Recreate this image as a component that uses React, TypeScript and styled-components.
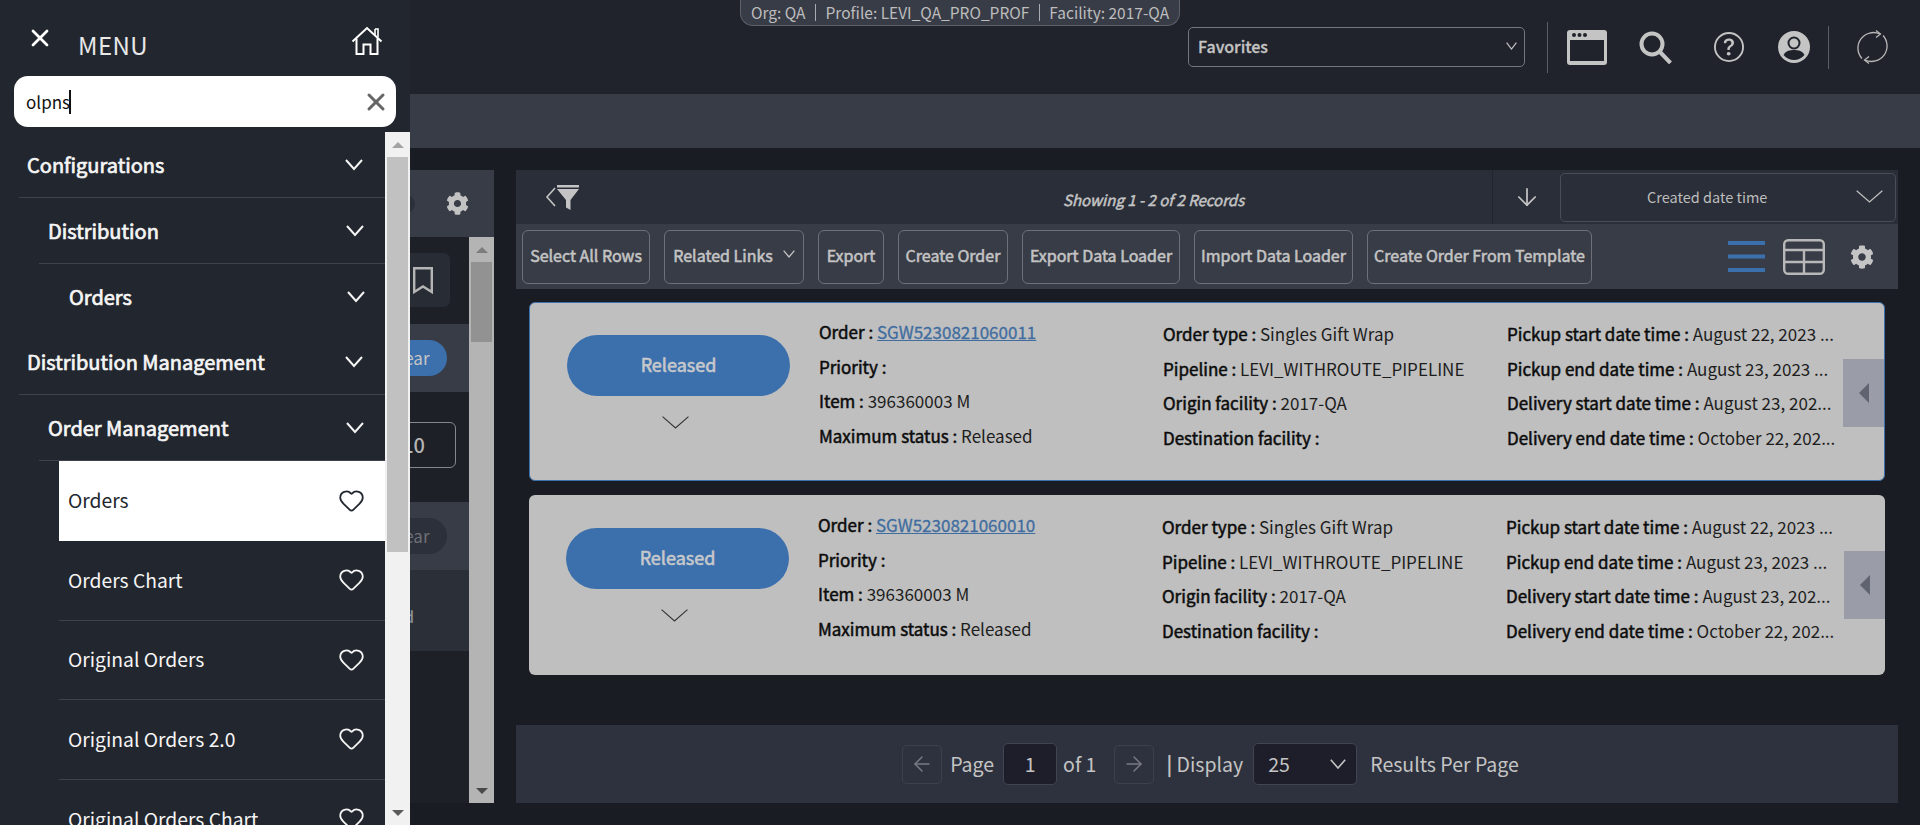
import styled, { createGlobalStyle } from "styled-components";
import { BsQuestionCircle } from "react-icons/bs";
import { FaCog } from "react-icons/fa";
import { ArrowDown, ArrowLeft, ArrowRight, Heart, X } from "lucide-react";

const FONT = `"Noto Sans CJK SC", "Noto Sans", sans-serif`;

const GlobalStyle = createGlobalStyle`
	* {
		box-sizing: border-box;
	}
	html,
	body {
		margin: 0;
		padding: 0;
		background: #191c22;
		overflow: hidden;
	}
	body {
		font-family: ${FONT};
	}
`;

const Page = styled.div`
	position: relative;
	width: 1920px;
	height: 825px;
	overflow: hidden;
	display: flex;
	flex-direction: column;
	background: #191c22;
`;

/* ---------- header ---------- */

const Header = styled.header`
	height: 94px;
	flex: none;
	display: flex;
	align-items: center;
	background: #21232c;
	padding-left: 740px;
`;

const OrgPill = styled.div`
	align-self: flex-start;
	height: 26px;
	width: 440px;
	flex: none;
	display: flex;
	align-items: center;
	justify-content: center;
	background: #383c47;
	border: 1px solid #5d616c;
	border-top: 0;
	border-radius: 0 0 13px 13px;
	color: #bdbdbd;
	font-size: 15.5px;
	line-height: 17px;
	white-space: nowrap;
`;

const OrgItem = styled.span`
	padding: 0 9.5px;
	& + & {
		border-left: 1px solid #a9abb0;
	}
`;

const Favorites = styled.div`
	width: 337px;
	height: 40px;
	flex: none;
	margin-left: 8px;
	padding: 0 7px 2px 9px;
	display: flex;
	align-items: center;
	justify-content: space-between;
	border: 1px solid #74767d;
	border-radius: 5px;
	color: #c4c4c4;
	font-size: 16px;
	font-weight: 500;
	-webkit-text-stroke: 0.3px;
	line-height: 20px;
`;

const VLine = styled.div<{ $h: number; $ml: number }>`
	width: 1px;
	height: ${(p) => p.$h}px;
	flex: none;
	margin-left: ${(p) => p.$ml}px;
	background: #5b5d64;
`;

const IconSlot = styled.div<{ $ml: number }>`
	display: flex;
	flex: none;
	align-items: center;
	margin-left: ${(p) => p.$ml}px;
	color: #c4c4c4;
`;

const SubBar = styled.div`
	height: 54px;
	flex: none;
	background: #383c47;
`;

/* ---------- body ---------- */

const Body = styled.div`
	flex: 1;
	display: flex;
	align-items: flex-start;
	padding: 22px 0 0 18px;
`;

const FilterPanel = styled.aside`
	width: 476px;
	height: 633px;
	flex: none;
	display: flex;
	flex-direction: column;
`;

const FilterHead = styled.div`
	height: 67px;
	flex: none;
	display: flex;
	align-items: center;
	justify-content: flex-end;
	gap: 31px;
	padding-right: 25px;
	background: #383c47;
	color: #c2c2c2;
`;

const HeadToggle = styled.div`
	width: 40px;
	height: 20px;
	border-radius: 10px;
	background: #2c303a;
`;

const FilterMain = styled.div`
	flex: 1;
	display: flex;
	min-height: 0;
`;

const FilterContent = styled.div`
	flex: 1;
	background: #1d2027;
	display: flex;
	flex-direction: column;
	color: #b5b5b5;
`;

const SaveRow = styled.div`
	display: flex;
	justify-content: flex-end;
	padding: 16px 19px 17px 0;
`;

const SaveButton = styled.div`
	width: 80px;
	height: 54px;
	display: flex;
	align-items: center;
	justify-content: flex-end;
	padding-right: 17px;
	border-radius: 6px;
	background: #272c35;
	color: #b5b5b5;
`;

const ClearBand = styled.div<{ $mb: number }>`
	height: 68px;
	flex: none;
	display: flex;
	align-items: center;
	justify-content: flex-end;
	padding-right: 22px;
	margin-bottom: ${(p) => p.$mb}px;
	background: #383c47;
`;

const ClearPill = styled.div<{ $active: boolean }>`
	width: 80px;
	height: 36px;
	display: flex;
	align-items: center;
	justify-content: center;
	padding-left: 4px;
	border-radius: 18px;
	background: ${(p) => (p.$active ? "#3c70ad" : "#2c303a")};
	color: ${(p) => (p.$active ? "#c4c4c4" : "#6d6f76")};
	font-size: 17px;
	line-height: 20px;
`;

const CountRow = styled.div`
	display: flex;
	justify-content: flex-end;
	padding: 0 13px 34px 0;
`;

const CountBox = styled.div`
	width: 120px;
	height: 46px;
	display: flex;
	align-items: center;
	justify-content: flex-end;
	padding-right: 30px;
	border: 1px solid #85878c;
	border-radius: 6px;
	color: #b5b5b5;
	font-size: 20px;
	font-weight: 500;
	line-height: 24px;
`;

const StatusRow = styled.div`
	height: 81px;
	flex: none;
	display: flex;
	align-items: center;
	justify-content: flex-end;
	padding: 10px 55px 0 0;
	background: #2a2f38;
	color: #8e9095;
	font-size: 16px;
	font-weight: 500;
	line-height: 20px;
`;

const Scrollbar = styled.div<{ $track: string }>`
	width: 25px;
	flex: none;
	display: flex;
	flex-direction: column;
	align-items: center;
	background: ${(p) => p.$track};
`;

const ScrollArrow = styled.div<{ $down?: boolean; $color: string }>`
	width: 25px;
	height: 25px;
	flex: none;
	display: flex;
	align-items: center;
	justify-content: center;
	&::before {
		content: "";
		border-left: 6px solid transparent;
		border-right: 6px solid transparent;
		${(p) => (p.$down ? "border-top" : "border-bottom")}: 6px solid ${(p) => p.$color};
	}
`;

const ScrollThumb = styled.div<{ $h: number; $color: string }>`
	width: 21px;
	height: ${(p) => p.$h}px;
	flex: none;
	background: ${(p) => p.$color};
`;

const Spacer = styled.div`
	flex: 1;
`;

/* ---------- results ---------- */

const Results = styled.main`
	width: 1382px;
	margin-left: 22px;
	flex: none;
`;

const TopRow = styled.div`
	position: relative;
	height: 54px;
	display: flex;
	align-items: center;
	background: #2a2e38;
	color: #c4c4c4;
`;

const FilterToggle = styled.div`
	width: 976px;
	padding-left: 29px;
	display: flex;
	align-items: center;
`;

const Showing = styled.div`
	position: absolute;
	left: 547px;
	top: 20px;
	color: #c4c4c4;
	font-size: 15px;
	font-style: italic;
	-webkit-text-stroke: 0.5px;
	line-height: 20px;
`;

const SortCell = styled.div`
	height: 54px;
	width: 69px;
	display: flex;
	align-items: center;
	justify-content: center;
	border-left: 1px solid #22252d;
`;

const SortSelect = styled.div`
	width: 336px;
	height: 49px;
	flex: none;
	display: flex;
	align-items: center;
	justify-content: space-between;
	padding: 0 12px 0 86px;
	margin-left: -1px;
	border: 1px solid #4a4d57;
	border-radius: 5px;
	color: #bdbdbd;
	font-size: 14.5px;
	line-height: 20px;
`;

const ActionRow = styled.div`
	height: 65px;
	display: flex;
	align-items: center;
	gap: 14px;
	padding-left: 6px;
	background: #383c47;
`;

const ActionButton = styled.div<{ $w: number }>`
	width: ${(p) => p.$w}px;
	height: 54px;
	flex: none;
	display: flex;
	align-items: center;
	justify-content: center;
	gap: 10px;
	padding-bottom: 4px;
	border: 1px solid #6e7078;
	border-radius: 6px;
	color: #c4c4c4;
	font-size: 16px;
	-webkit-text-stroke: 0.55px;
	line-height: 20px;
	white-space: nowrap;
`;

const ViewIcons = styled.div`
	margin-left: auto;
	padding-right: 24px;
	display: flex;
	align-items: center;
	color: #c4c4c4;
`;

const ViewIcon = styled.div<{ $ml: number }>`
	display: flex;
	margin-left: ${(p) => p.$ml}px;
`;

const CardList = styled.div`
	padding: 13px 13px 50px;
	display: flex;
	flex-direction: column;
	gap: 14px;
`;

const Card = styled.article<{ $selected?: boolean }>`
	position: relative;
	height: ${(p) => (p.$selected ? 179 : 180)}px;
	display: grid;
	grid-template-columns: 252px 344px 344px 332px;
	align-items: start;
	padding: ${(p) => (p.$selected ? "12px 0 0 37px" : "13px 0 0 37px")};
	background: #bfbfbf;
	border: ${(p) => (p.$selected ? "1px solid #3c70ad" : "none")};
	border-radius: 6px;
`;

const StatusCol = styled.div`
	width: 223px;
	margin-top: 20px;
	display: flex;
	flex-direction: column;
	align-items: center;
`;

const StatusPill = styled.div`
	width: 223px;
	height: 61px;
	display: flex;
	align-items: center;
	justify-content: center;
	padding-bottom: 3px;
	border-radius: 31px;
	background: #3c70ad;
	color: #c6c8cb;
	font-size: 18px;
	-webkit-text-stroke: 0.6px;
	line-height: 24px;
`;

const StatusChevron = styled.div`
	display: flex;
	margin: 20px 7px 0 0;
	color: #333;
`;

const DetailCol = styled.div<{ $mt: number }>`
	margin-top: ${(p) => p.$mt}px;
	min-width: 0;
`;

const Detail = styled.div`
	height: 34.7px;
	line-height: 34.7px;
	font-size: 17px;
	color: #1d1d1d;
	white-space: nowrap;
`;

const Label = styled.span`
	color: #0c0c0c;
	-webkit-text-stroke: 0.5px;
`;

const OrderLink = styled.a`
	color: #3f6d9f;
	-webkit-text-stroke: 0.3px;
	text-decoration: underline;
`;

const ExpandTab = styled.div`
	position: absolute;
	right: 0;
	top: 56px;
	width: 41px;
	height: 68px;
	display: flex;
	align-items: center;
	justify-content: center;
	background: #9a9ca8;
	&::before {
		content: "";
		border-top: 10px solid transparent;
		border-bottom: 10px solid transparent;
		border-right: 10px solid #5f6470;
	}
`;

const Pager = styled.div`
	height: 78px;
	display: flex;
	align-items: center;
	justify-content: center;
	padding-left: 7px;
	background: #2e323e;
	color: #c4c4c4;
	font-size: 19.5px;
	line-height: 26px;
`;

const PagerButton = styled.div<{ $ml?: number }>`
	width: 40px;
	height: 39px;
	margin-left: ${(p) => p.$ml || 0}px;
	display: flex;
	align-items: center;
	justify-content: center;
	border: 1px solid #3e414c;
	border-radius: 5px;
	color: #777a82;
`;

const PagerInput = styled.div`
	height: 42px;
	display: flex;
	align-items: center;
	justify-content: center;
	background: #1d1e29;
	border: 1px solid #42454f;
	border-radius: 5px;
`;

const PageInput = styled(PagerInput)`
	width: 54px;
	margin: 0 6px 0 9px;
`;

const SizeInput = styled(PagerInput)`
	width: 104px;
	margin: 0 13px 0 10px;
	justify-content: space-between;
	padding: 0 10px 0 14px;
`;

const PagerText = styled.span<{ $ml?: number }>`
	margin-left: ${(p) => p.$ml || 0}px;
	white-space: nowrap;
`;

const PagerBar = styled.b`
	font-weight: 700;
`;

/* ---------- menu overlay ---------- */

const Menu = styled.nav`
	position: absolute;
	left: 0;
	top: 0;
	width: 410px;
	height: 825px;
	display: flex;
	flex-direction: column;
	background: #22262e;
`;

const MenuHead = styled.div`
	height: 132px;
	flex: none;
`;

const MenuTop = styled.div`
	height: 76px;
	display: flex;
	align-items: flex-start;
	color: #fff;
`;

const CloseIcon = styled.div`
	display: flex;
	margin: 24px 0 0 26px;
`;

const MenuTitle = styled.div`
	margin: 27px 0 0 24px;
	color: #e8e8e8;
	font-size: 24px;
	line-height: 36px;
	letter-spacing: 0.4px;
`;

const HomeIcon = styled.div`
	display: flex;
	margin: 26px 27px 0 auto;
`;

const SearchBox = styled.div`
	width: 382px;
	height: 51px;
	margin-left: 14px;
	display: flex;
	align-items: center;
	padding: 0 6px 0 12px;
	background: #fff;
	border-radius: 14px;
	color: #111;
	font-size: 17px;
	line-height: 24px;
`;

const Caret = styled.span`
	width: 2px;
	height: 24px;
	margin-left: -1px;
	background: #111;
`;

const ClearIcon = styled.div`
	display: flex;
	margin-left: auto;
	color: #666;
`;

const MenuBody = styled.div`
	flex: 1;
	display: flex;
	min-height: 0;
`;

const MenuList = styled.div`
	flex: 1;
	overflow: hidden;
`;

const GroupRow = styled.div<{ $level: number; $plain?: boolean }>`
	height: ${(p) => (p.$plain ? 65 : 66)}px;
	margin-left: ${(p) => 19 + p.$level * 20}px;
	padding: 0 ${(p) => 22 - p.$level}px 0 ${(p) => 8 + p.$level}px;
	display: flex;
	align-items: center;
	justify-content: space-between;
	border-bottom: ${(p) => (p.$plain ? "0" : "1px solid #3e424c")};
	color: #f5f5f5;
	font-size: 20px;
	-webkit-text-stroke: 0.7px;
	line-height: 28px;
	svg {
		-webkit-text-stroke: 0;
	}
`;

const LeafRow = styled.div<{ $active?: boolean; $h: number }>`
	height: ${(p) => p.$h}px;
	margin-left: 59px;
	padding: 0 20px 2px 9px;
	display: flex;
	align-items: center;
	justify-content: space-between;
	background: ${(p) => (p.$active ? "#fff" : "transparent")};
	border-bottom: ${(p) => (p.$active ? "0" : "1px solid #3e424c")};
	color: ${(p) => (p.$active ? "#22262e" : "#f5f5f5")};
	font-size: 19.3px;
	line-height: 28px;
`;

/* ---------- drawings ---------- */

function Chevron({ w, h, sw }: { w: number; h: number; sw: number }) {
	return (
		<svg width={w} height={h + sw} viewBox={`0 0 ${w} ${h + sw}`} fill="none">
			<polyline
				points={`${sw / 2},${sw / 2} ${w / 2},${h} ${w - sw / 2},${sw / 2}`}
				stroke="currentColor"
				strokeWidth={sw}
			/>
		</svg>
	);
}

function BackGlyph() {
	return (
		<svg width="12" height="20" viewBox="0 0 12 20" fill="none" stroke="#c4c4c4" strokeWidth="1.6">
			<polyline points="10,1 2,10 10,19" />
		</svg>
	);
}

function HomeGlyph() {
	return (
		<svg width="32" height="30" viewBox="0 0 32 30" fill="none" stroke="#fff" strokeWidth="2">
			<path d="M1.5 15.5 L16 2 L30.5 15.5" />
			<path d="M24 3 V9 M24 3 H27 V11" strokeWidth="1.6" />
			<path d="M5.5 12.5 V28 H12.5 V18.5 H19.5 V28 H26.5 V12.5" />
		</svg>
	);
}

function WindowGlyph() {
	return (
		<svg width="40" height="35" viewBox="0 0 40 35">
			<rect width="40" height="35" rx="3" fill="#c4c4c4" />
			<rect x="3" y="10" width="34" height="21" fill="#21232c" />
			<circle cx="7" cy="5" r="2" fill="#21232c" />
			<circle cx="12.5" cy="5" r="2" fill="#21232c" />
			<circle cx="18" cy="5" r="2" fill="#21232c" />
		</svg>
	);
}

function SearchGlyph() {
	return (
		<svg width="33" height="33" viewBox="0 0 33 33" fill="none" stroke="#c4c4c4" strokeWidth="4">
			<circle cx="13" cy="13" r="10.5" />
			<line x1="20.5" y1="20.5" x2="31.5" y2="32" />
		</svg>
	);
}

function UserGlyph() {
	return (
		<svg width="32" height="32" viewBox="0 0 32 32">
			<circle cx="16" cy="16" r="16" fill="#c4c4c4" />
			<circle cx="16" cy="12" r="5.5" fill="#c4c4c4" stroke="#21232c" strokeWidth="2" />
			<path d="M5.5 24 C8 19.5 12 19 16 19 C20 19 24 19.5 26.5 24 C23.5 27.5 20 29 16 29 C12 29 8.5 27.5 5.5 24 Z" fill="#21232c" />
		</svg>
	);
}

function RefreshGlyph() {
	return (
		<svg width="35" height="36" viewBox="0 0 35 36" fill="none" stroke="#b8b8b8" strokeWidth="1.3">
			<path d="M25 5 A15.5 15.5 0 0 0 7 29.5" />
			<path d="M21 1.5 L25.5 5 L21 8.5" />
			<path d="M10 31 A15.5 15.5 0 0 0 28 6.5" />
			<path d="M14 27.5 L9.5 31 L14 34.5" />
		</svg>
	);
}

function FunnelGlyph() {
	return (
		<svg width="22" height="25" viewBox="0 0 22 25" fill="#c4c4c4">
			<rect width="22" height="2.5" />
			<path d="M0 4 H22 L13.5 15 V25 L9 22.5 V15 Z" />
		</svg>
	);
}

function LinesGlyph() {
	return (
		<svg width="37" height="31" viewBox="0 0 37 31" fill="#3c70ad">
			<rect width="37" height="4" />
			<rect y="13.5" width="37" height="4" />
			<rect y="27" width="37" height="4" />
		</svg>
	);
}

function TableGlyph() {
	return (
		<svg width="42" height="36" viewBox="0 0 42 36" fill="none" stroke="#b8b8b8" strokeWidth="2.4">
			<rect x="1.2" y="1.2" width="39.6" height="33.6" rx="4" />
			<path d="M1 11 H41 M1 23 H41 M21 11 V35" />
		</svg>
	);
}

function BookmarkGlyph() {
	return (
		<svg width="20" height="27" viewBox="0 0 20 27" fill="none" stroke="currentColor" strokeWidth="2.4">
			<path d="M1.2 1.2 H18.8 V25 L10 19.5 L1.2 25 Z" />
		</svg>
	);
}

/* ---------- data ---------- */

type OrderCard = {
	id: string;
	selected?: boolean;
};

const orders: OrderCard[] = [
	{ id: "SGW5230821060011", selected: true },
	{ id: "SGW5230821060010" },
];

const actions = [
	{ label: "Select All Rows", w: 128 },
	{ label: "Related Links", w: 140, caret: true },
	{ label: "Export", w: 66 },
	{ label: "Create Order", w: 110 },
	{ label: "Export Data Loader", w: 158 },
	{ label: "Import Data Loader", w: 159 },
	{ label: "Create Order From Template", w: 225 },
];

const middleDetails = [
	["Order type :", "Singles Gift Wrap"],
	["Pipeline :", "LEVI_WITHROUTE_PIPELINE"],
	["Origin facility :", "2017-QA"],
	["Destination facility :", ""],
];

const dateDetails = [
	["Pickup start date time :", "August 22, 2023 ..."],
	["Pickup end date time :", "August 23, 2023 ..."],
	["Delivery start date time :", "August 23, 202..."],
	["Delivery end date time :", "October 22, 202..."],
];

const leaves = [
	{ label: "Orders", h: 80, active: true },
	{ label: "Orders Chart", h: 80 },
	{ label: "Original Orders", h: 79 },
	{ label: "Original Orders 2.0", h: 80 },
	{ label: "Original Orders Chart", h: 80 },
];

function DetailLine({ label, value }: { label: string; value: string }) {
	return (
		<Detail>
			<Label>{label}</Label> {value}
		</Detail>
	);
}

function App() {
	return (
		<Page>
			<GlobalStyle />
			<Header>
				<OrgPill>
					<OrgItem>Org: QA</OrgItem>
					<OrgItem>Profile: LEVI_QA_PRO_PROF</OrgItem>
					<OrgItem>Facility: 2017-QA</OrgItem>
				</OrgPill>
				<Favorites>
					Favorites
					<Chevron w={11} h={7} sw={1.2} />
				</Favorites>
				<VLine $h={51} $ml={22} />
				<IconSlot $ml={19}>
					<WindowGlyph />
				</IconSlot>
				<IconSlot $ml={32}>
					<SearchGlyph />
				</IconSlot>
				<IconSlot $ml={42}>
					<BsQuestionCircle size={30} />
				</IconSlot>
				<IconSlot $ml={34}>
					<UserGlyph />
				</IconSlot>
				<VLine $h={43} $ml={18} />
				<IconSlot $ml={26}>
					<RefreshGlyph />
				</IconSlot>
			</Header>
			<SubBar />

			<Body>
				<FilterPanel>
					<FilterHead>
						<HeadToggle />
						<FaCog size={23} />
					</FilterHead>
					<FilterMain>
						<FilterContent>
							<SaveRow>
								<SaveButton>
									<BookmarkGlyph />
								</SaveButton>
							</SaveRow>
							<ClearBand $mb={30}>
								<ClearPill $active>Clear</ClearPill>
							</ClearBand>
							<CountRow>
								<CountBox>10</CountBox>
							</CountRow>
							<ClearBand $mb={0}>
								<ClearPill $active={false}>Clear</ClearPill>
							</ClearBand>
							<StatusRow>Released</StatusRow>
						</FilterContent>
						<Scrollbar $track="#b4b4b4">
							<ScrollArrow $color="#7d7d7d" />
							<ScrollThumb $h={80} $color="#929292" />
							<Spacer />
							<ScrollArrow $down $color="#4a4a4a" />
						</Scrollbar>
					</FilterMain>
				</FilterPanel>

				<Results>
					<TopRow>
						<FilterToggle>
							<BackGlyph />
							<FunnelGlyph />
						</FilterToggle>
						<Showing>Showing 1 - 2 of 2 Records</Showing>
						<SortCell>
							<ArrowDown size={28} strokeWidth={1.5} />
						</SortCell>
						<SortSelect>
							Created date time
							<Chevron w={27} h={12} sw={1.3} />
						</SortSelect>
					</TopRow>
					<ActionRow>
						{actions.map((a) => (
							<ActionButton key={a.label} $w={a.w}>
								{a.label}
								{a.caret && <Chevron w={12} h={7} sw={1.3} />}
							</ActionButton>
						))}
						<ViewIcons>
							<ViewIcon $ml={0}>
								<LinesGlyph />
							</ViewIcon>
							<ViewIcon $ml={18}>
								<TableGlyph />
							</ViewIcon>
							<ViewIcon $ml={25}>
								<FaCog size={24} />
							</ViewIcon>
						</ViewIcons>
					</ActionRow>
					<CardList>
						{orders.map((o) => (
							<Card key={o.id} $selected={o.selected}>
								<StatusCol>
									<StatusPill>Released</StatusPill>
									<StatusChevron>
										<Chevron w={27} h={12} sw={1.1} />
									</StatusChevron>
								</StatusCol>
								<DetailCol $mt={0}>
									<Detail>
										<Label>Order :</Label> <OrderLink>{o.id}</OrderLink>
									</Detail>
									<DetailLine label="Priority :" value="" />
									<DetailLine label="Item :" value="396360003 M" />
									<DetailLine label="Maximum status :" value="Released" />
								</DetailCol>
								<DetailCol $mt={2}>
									{middleDetails.map(([label, value]) => (
										<DetailLine key={label} label={label} value={value} />
									))}
								</DetailCol>
								<DetailCol $mt={2}>
									{dateDetails.map(([label, value]) => (
										<DetailLine key={label} label={label} value={value} />
									))}
								</DetailCol>
								<ExpandTab />
							</Card>
						))}
					</CardList>
					<Pager>
						<PagerButton>
							<ArrowLeft size={24} strokeWidth={1.5} />
						</PagerButton>
						<PagerText $ml={8}>Page</PagerText>
						<PageInput>1</PageInput>
						<PagerText>of 1</PagerText>
						<PagerButton $ml={18}>
							<ArrowRight size={24} strokeWidth={1.5} />
						</PagerButton>
						<PagerText $ml={12}>
							<PagerBar>|</PagerBar> Display
						</PagerText>
						<SizeInput>
							25
							<Chevron w={16} h={9} sw={1.6} />
						</SizeInput>
						<PagerText>Results Per Page</PagerText>
					</Pager>
				</Results>
			</Body>

			<Menu>
				<MenuHead>
					<MenuTop>
						<CloseIcon>
							<X size={28} strokeWidth={2.4} />
						</CloseIcon>
						<MenuTitle>MENU</MenuTitle>
						<HomeIcon>
							<HomeGlyph />
						</HomeIcon>
					</MenuTop>
					<SearchBox>
						olpns
						<Caret />
						<ClearIcon>
							<X size={28} strokeWidth={2.6} />
						</ClearIcon>
					</SearchBox>
				</MenuHead>
				<MenuBody>
					<MenuList>
						<GroupRow $level={0}>
							Configurations
							<Chevron w={18} h={10} sw={2} />
						</GroupRow>
						<GroupRow $level={1}>
							Distribution
							<Chevron w={18} h={10} sw={2} />
						</GroupRow>
						<GroupRow $level={2} $plain>
							Orders
							<Chevron w={18} h={10} sw={2} />
						</GroupRow>
						<GroupRow $level={0}>
							Distribution Management
							<Chevron w={18} h={10} sw={2} />
						</GroupRow>
						<GroupRow $level={1}>
							Order Management
							<Chevron w={18} h={10} sw={2} />
						</GroupRow>
						{leaves.map((l) => (
							<LeafRow key={l.label} $active={l.active} $h={l.h}>
								{l.label}
								<Heart size={27} strokeWidth={1.6} />
							</LeafRow>
						))}
					</MenuList>
					<Scrollbar $track="#f1f1f1">
						<ScrollArrow $color="#a3a3a3" />
						<ScrollThumb $h={395} $color="#c1c1c1" />
						<Spacer />
						<ScrollArrow $down $color="#5a5a5a" />
					</Scrollbar>
				</MenuBody>
			</Menu>
		</Page>
	);
}

export default App;
